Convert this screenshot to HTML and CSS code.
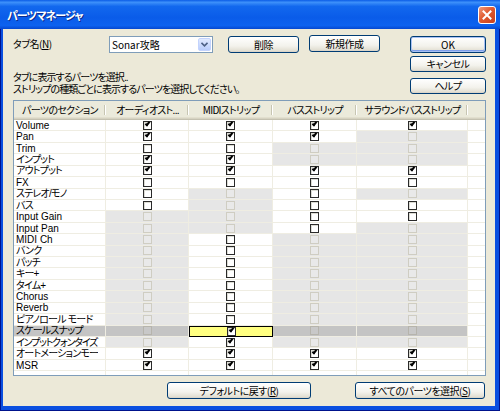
FILE: index.html
```html
<!DOCTYPE html>
<html lang="ja">
<head>
    <meta charset="UTF-8">
    <title>パーツマネージャ</title>
    <link rel="stylesheet" href="styles.css">
</head>
<body>
    <div class="window">
        <div class="titlebar">
            <span class="title">パーツマネージャ</span>
            <div class="close">
                <svg width="10" height="10" viewBox="0 0 10 10"><path d="M1.5 1.5 L8.5 8.5 M8.5 1.5 L1.5 8.5" stroke="#fff" stroke-width="2" stroke-linecap="square"/></svg>
            </div>
        </div>

        <div class="frame">
            <div class="content">

                <div class="top">
                    <div class="top-left">
                        <div class="tabrow">
                            <span class="label">タブ名(<u>N</u>)</span>
                            <div class="combo">
                                <span>Sonar攻略</span>
                                <div class="drop">
                                    <svg width="7" height="5" viewBox="0 0 7 5"><path d="M0.5 0.8 L3.5 3.8 L6.5 0.8" fill="none" stroke="#4d6185" stroke-width="1.6"/></svg>
                                </div>
                            </div>
                            <div class="btn del">削除</div>
                            <div class="btn new">新規作成</div>
                        </div>
                        <div class="desc">
                            <p>タブに表示するパーツを選択..</p>
                            <p>ストリップの種類ごとに表示するパーツを選択してください。</p>
                        </div>
                    </div>
                    <div class="top-right">
                        <div class="btn ok">OK</div>
                        <div class="btn cancel">キャンセル</div>
                        <div class="btn help">ヘルプ</div>
                    </div>
                </div>

                <div class="list">
                    <div class="hdr">
                        <div class="h name">パーツのセクション</div>
                        <div class="h col1">オーディオスト...</div>
                        <div class="h col2">MIDIストリップ</div>
                        <div class="h col3">バスストリップ</div>
                        <div class="h col4">サラウンドバスストリップ</div>
                        <div class="h pad"></div>
                    </div>

                    <div class="row">
                        <div class="c name"><span>Volume</span></div>
                        <div class="c col1"><i class="cb ck"></i></div>
                        <div class="c col2"><i class="cb ck"></i></div>
                        <div class="c col3"><i class="cb ck"></i></div>
                        <div class="c col4"><i class="cb ck"></i></div>
                        <div class="c pad"></div>
                    </div>
                    <div class="row">
                        <div class="c name"><span>Pan</span></div>
                        <div class="c col1"><i class="cb ck"></i></div>
                        <div class="c col2"><i class="cb ck"></i></div>
                        <div class="c col3"><i class="cb ck"></i></div>
                        <div class="c col4 off"><i class="cb"></i></div>
                        <div class="c pad"></div>
                    </div>
                    <div class="row">
                        <div class="c name"><span>Trim</span></div>
                        <div class="c col1"><i class="cb"></i></div>
                        <div class="c col2"><i class="cb"></i></div>
                        <div class="c col3 off"><i class="cb"></i></div>
                        <div class="c col4 off"><i class="cb"></i></div>
                        <div class="c pad"></div>
                    </div>
                    <div class="row">
                        <div class="c name"><span class="jp">インプット</span></div>
                        <div class="c col1"><i class="cb ck"></i></div>
                        <div class="c col2"><i class="cb ck"></i></div>
                        <div class="c col3 off"><i class="cb"></i></div>
                        <div class="c col4 off"><i class="cb"></i></div>
                        <div class="c pad"></div>
                    </div>
                    <div class="row">
                        <div class="c name"><span class="jp">アウトプット</span></div>
                        <div class="c col1"><i class="cb ck"></i></div>
                        <div class="c col2"><i class="cb ck"></i></div>
                        <div class="c col3"><i class="cb ck"></i></div>
                        <div class="c col4"><i class="cb ck"></i></div>
                        <div class="c pad"></div>
                    </div>
                    <div class="row">
                        <div class="c name"><span>FX</span></div>
                        <div class="c col1"><i class="cb"></i></div>
                        <div class="c col2"><i class="cb"></i></div>
                        <div class="c col3"><i class="cb"></i></div>
                        <div class="c col4"><i class="cb"></i></div>
                        <div class="c pad"></div>
                    </div>
                    <div class="row">
                        <div class="c name"><span class="jp">ステレオ/モノ</span></div>
                        <div class="c col1"><i class="cb"></i></div>
                        <div class="c col2 off"><i class="cb"></i></div>
                        <div class="c col3"><i class="cb"></i></div>
                        <div class="c col4 off"><i class="cb"></i></div>
                        <div class="c pad"></div>
                    </div>
                    <div class="row">
                        <div class="c name"><span class="jp">バス</span></div>
                        <div class="c col1"><i class="cb"></i></div>
                        <div class="c col2 off"><i class="cb"></i></div>
                        <div class="c col3"><i class="cb"></i></div>
                        <div class="c col4"><i class="cb"></i></div>
                        <div class="c pad"></div>
                    </div>
                    <div class="row">
                        <div class="c name"><span>Input Gain</span></div>
                        <div class="c col1 off"><i class="cb"></i></div>
                        <div class="c col2 off"><i class="cb"></i></div>
                        <div class="c col3"><i class="cb"></i></div>
                        <div class="c col4"><i class="cb"></i></div>
                        <div class="c pad"></div>
                    </div>
                    <div class="row">
                        <div class="c name"><span>Input Pan</span></div>
                        <div class="c col1 off"><i class="cb"></i></div>
                        <div class="c col2 off"><i class="cb"></i></div>
                        <div class="c col3"><i class="cb"></i></div>
                        <div class="c col4 off"><i class="cb"></i></div>
                        <div class="c pad"></div>
                    </div>
                    <div class="row">
                        <div class="c name"><span>MIDI Ch</span></div>
                        <div class="c col1 off"><i class="cb"></i></div>
                        <div class="c col2"><i class="cb"></i></div>
                        <div class="c col3 off"><i class="cb"></i></div>
                        <div class="c col4 off"><i class="cb"></i></div>
                        <div class="c pad"></div>
                    </div>
                    <div class="row">
                        <div class="c name"><span class="jp">バンク</span></div>
                        <div class="c col1 off"><i class="cb"></i></div>
                        <div class="c col2"><i class="cb"></i></div>
                        <div class="c col3 off"><i class="cb"></i></div>
                        <div class="c col4 off"><i class="cb"></i></div>
                        <div class="c pad"></div>
                    </div>
                    <div class="row">
                        <div class="c name"><span class="jp">パッチ</span></div>
                        <div class="c col1 off"><i class="cb"></i></div>
                        <div class="c col2"><i class="cb"></i></div>
                        <div class="c col3 off"><i class="cb"></i></div>
                        <div class="c col4 off"><i class="cb"></i></div>
                        <div class="c pad"></div>
                    </div>
                    <div class="row">
                        <div class="c name"><span class="jp">キー+</span></div>
                        <div class="c col1 off"><i class="cb"></i></div>
                        <div class="c col2"><i class="cb"></i></div>
                        <div class="c col3 off"><i class="cb"></i></div>
                        <div class="c col4 off"><i class="cb"></i></div>
                        <div class="c pad"></div>
                    </div>
                    <div class="row">
                        <div class="c name"><span class="jp">タイム+</span></div>
                        <div class="c col1 off"><i class="cb"></i></div>
                        <div class="c col2"><i class="cb"></i></div>
                        <div class="c col3 off"><i class="cb"></i></div>
                        <div class="c col4 off"><i class="cb"></i></div>
                        <div class="c pad"></div>
                    </div>
                    <div class="row">
                        <div class="c name"><span>Chorus</span></div>
                        <div class="c col1 off"><i class="cb"></i></div>
                        <div class="c col2"><i class="cb"></i></div>
                        <div class="c col3 off"><i class="cb"></i></div>
                        <div class="c col4 off"><i class="cb"></i></div>
                        <div class="c pad"></div>
                    </div>
                    <div class="row">
                        <div class="c name"><span>Reverb</span></div>
                        <div class="c col1 off"><i class="cb"></i></div>
                        <div class="c col2"><i class="cb"></i></div>
                        <div class="c col3 off"><i class="cb"></i></div>
                        <div class="c col4 off"><i class="cb"></i></div>
                        <div class="c pad"></div>
                    </div>
                    <div class="row">
                        <div class="c name"><span class="jp">ピアノロール モード</span></div>
                        <div class="c col1 off"><i class="cb"></i></div>
                        <div class="c col2"><i class="cb"></i></div>
                        <div class="c col3 off"><i class="cb"></i></div>
                        <div class="c col4 off"><i class="cb"></i></div>
                        <div class="c pad"></div>
                    </div>
                    <div class="row sel">
                        <div class="c name"><span class="jp">スケールスナップ</span></div>
                        <div class="c col1 off"><i class="cb"></i></div>
                        <div class="c col2 focus"><i class="cb ck"></i></div>
                        <div class="c col3 off"><i class="cb"></i></div>
                        <div class="c col4 off"><i class="cb"></i></div>
                        <div class="c pad"></div>
                    </div>
                    <div class="row">
                        <div class="c name"><span class="jp tight">インプットクォンタイズ</span></div>
                        <div class="c col1 off"><i class="cb"></i></div>
                        <div class="c col2"><i class="cb ck"></i></div>
                        <div class="c col3 off"><i class="cb"></i></div>
                        <div class="c col4 off"><i class="cb"></i></div>
                        <div class="c pad"></div>
                    </div>
                    <div class="row">
                        <div class="c name"><span class="jp cut">オートメーションモード</span></div>
                        <div class="c col1"><i class="cb ck"></i></div>
                        <div class="c col2"><i class="cb ck"></i></div>
                        <div class="c col3"><i class="cb ck"></i></div>
                        <div class="c col4"><i class="cb ck"></i></div>
                        <div class="c pad"></div>
                    </div>
                    <div class="row">
                        <div class="c name"><span>MSR</span></div>
                        <div class="c col1"><i class="cb ck"></i></div>
                        <div class="c col2"><i class="cb ck"></i></div>
                        <div class="c col3"><i class="cb ck"></i></div>
                        <div class="c col4"><i class="cb ck"></i></div>
                        <div class="c pad"></div>
                    </div>
                    <div class="row fill">
                        <div class="c name"></div>
                        <div class="c col1"></div>
                        <div class="c col2"></div>
                        <div class="c col3"></div>
                        <div class="c col4"></div>
                        <div class="c pad"></div>
                    </div>
                </div>

                <div class="bottom">
                    <div class="btn reset">デフォルトに戻す(<u>R</u>)</div>
                    <div class="btn all">すべてのパーツを選択(<u>S</u>)</div>
                </div>

            </div>
        </div>
    </div>
</body>
</html>
```

FILE: styles.css
```css
*,
*::before,
*::after {
    margin: 0;
    padding: 0;
    box-sizing: border-box;
}

body {
    width: 500px;
    height: 411px;
    overflow: hidden;
    font-family: "Noto Sans CJK JP", sans-serif;
    font-size: 10px;
    font-feature-settings: "palt";
    letter-spacing: -0.5px;
    color: #000;
}

.window {
    width: 500px;
    height: 411px;
    display: flex;
    flex-direction: column;
}

/* title bar */
.titlebar {
    height: 29px;
    display: flex;
    align-items: center;
    padding: 0 4px 0 7px;
    background: linear-gradient(#0b5ce6 0%, #3d90fa 8%, #1268ee 22%, #0a5ce9 60%, #0d62ef 88%, #0548d0 100%);
}

.title {
    color: #fff;
    font-weight: bold;
    font-size: 11px;
    letter-spacing: -0.9px;
    text-shadow: 1px 1px #0c2a8a;
}

.close {
    margin-left: auto;
    width: 18px;
    height: 18px;
    border: 1px solid #fff;
    border-radius: 3px;
    background: linear-gradient(135deg, #f09a7c, #e05a30 45%, #c8401c);
    display: flex;
    align-items: center;
    justify-content: center;
}

/* blue window border */
.frame {
    flex: 1;
    display: flex;
    padding: 0 5px 5px 3px;
    background: #0a4fe0;
    box-shadow: inset 1px 0 #00138c, inset -1px 0 #00138c, inset 0 -1px #00138c;
}

.content {
    flex: 1;
    display: flex;
    flex-direction: column;
    background: #ece9d8;
    padding: 6px 9px 0 10px;
}

/* top area */
.top {
    display: flex;
    height: 65px;
}

.top-left {
    flex: 1;
}

.tabrow {
    display: flex;
    align-items: flex-start;
    margin-top: 1px;
    height: 17px;
}

.label {
    width: 96px;
    line-height: 16px;
}

.combo {
    width: 104px;
    height: 17px;
    border: 1px solid #7f9db9;
    background: #fff;
    display: flex;
}

.combo span {
    flex: 1;
    padding-left: 2px;
    line-height: 15px;
    letter-spacing: 0;
}

.drop {
    width: 13px;
    margin: 1px;
    border: 1px solid #c3d3fd;
    border-radius: 2px;
    background: linear-gradient(#e1eafe, #b9cdfb);
    display: flex;
    align-items: center;
    justify-content: center;
}

.btn {
    height: 17px;
    border: 1px solid #003c74;
    border-radius: 3px;
    background: linear-gradient(#ffffff, #f3f2ec 60%, #e3e0d4 90%, #d6d0c5);
    text-align: center;
    line-height: 15px;
    white-space: nowrap;
}

.btn.del {
    width: 71px;
    margin-left: 15px;
}

.btn.new {
    width: 71px;
    margin-left: 10px;
    margin-top: -1px;
}

.desc {
    margin-top: 19px;
    line-height: 12px;
    font-family: "Liberation Sans", "Noto Sans CJK JP", sans-serif;
    letter-spacing: -0.9px;
}

.top-right {
    width: 76px;
    display: flex;
    flex-direction: column;
}

.btn.ok {
    margin-top: 1px;
    letter-spacing: 0;
    box-shadow: inset 0 0 0 1px #a9c2f4, inset 0 -1px 0 1px #7e9ee9;
}

.btn.cancel {
    margin-top: 3px;
    height: 16px;
    line-height: 14px;
}

.btn.help {
    margin-top: 6px;
    height: 16px;
    line-height: 14px;
}

/* list view */
.list {
    height: 276px;
    border: 1px solid #7f9db9;
    background: #fff;
    display: flex;
    flex-direction: column;
}

.name { width: 92px; }
.col1 { width: 83px; }
.col2 { width: 84px; }
.col3 { width: 84px; }
.col4 { width: 111px; }
.pad  { flex: 1; }

.hdr {
    display: flex;
    height: 19px;
    flex-shrink: 0;
    background: #ebeadb;
    box-shadow: inset 0 -1px #c4c1b0, inset 0 -2px #d6d3c2, inset 0 -3px #e2dfce;
}

.h {
    position: relative;
    text-align: center;
    line-height: 18px;
    white-space: nowrap;
    letter-spacing: -0.7px;
}

.h::after {
    content: "";
    position: absolute;
    right: 0;
    top: 4px;
    bottom: 5px;
    width: 2px;
    background: linear-gradient(to right, #c7c5b2 50%, #fff 50%);
}

.h.pad::after {
    display: none;
}

.row {
    display: flex;
    height: 11.43px;
    flex-shrink: 0;
}

.row.fill {
    flex: 1;
    height: auto;
}

.c {
    border-right: 1px solid #efede2;
    border-bottom: 1px solid #efede2;
    display: flex;
    align-items: center;
    justify-content: center;
    line-height: 11px;
}

.row.fill .c {
    border-bottom: none;
}

.c.pad {
    border-right: none;
}

.c.name {
    justify-content: flex-start;
    padding-left: 2px;
    white-space: nowrap;
    font-family: "Liberation Sans", "Noto Sans CJK JP", sans-serif;
    letter-spacing: 0;
}

.c.name .jp {
    letter-spacing: -0.8px;
}

.c.name .tight {
    letter-spacing: -1.2px;
}

.c.name .cut {
    display: block;
    max-width: 82px;
    overflow-x: clip;
}

.c.off {
    background: #e6e6e6;
}

.row.sel .c {
    background: #c4c4c4;
}

.row.sel .c.pad {
    background: #fff;
}

.row.sel .c.focus {
    background: #ffff80;
    border: 1px solid #000;
}

/* check boxes */
.cb {
    position: relative;
    width: 9px;
    height: 9px;
    border: 1px solid #2a2a2a;
    background: #fff;
    box-shadow: inset 1px 1px #dcdcd4;
}

.off .cb {
    border-color: #cfcdc2;
    background: #e9e9e9;
    box-shadow: none;
}

.row.sel .off .cb {
    border-color: #b6b4ac;
    background: #c8c8c8;
}

.cb.ck::after {
    content: "";
    position: absolute;
    left: 1px;
    top: 0px;
    width: 5px;
    height: 3px;
    border-left: 2px solid #000;
    border-bottom: 2px solid #000;
    transform: rotate(-50deg);
}

/* bottom buttons */
.bottom {
    display: flex;
    justify-content: flex-end;
    margin-top: 6px;
    padding-right: 1px;
}

.btn.reset {
    width: 144px;
}

.btn.all {
    width: 130px;
    margin-left: 44px;
}
```
